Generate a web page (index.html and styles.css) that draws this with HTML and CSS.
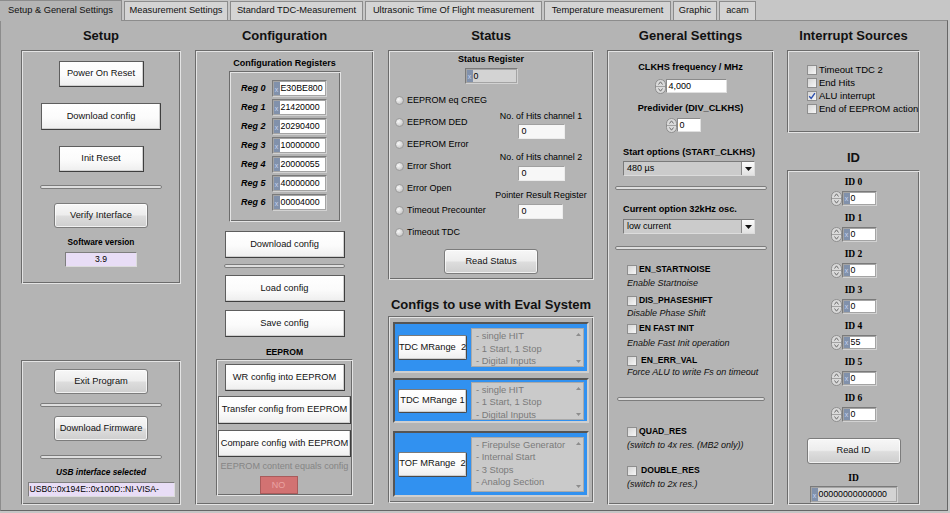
FILE: index.html
```html
<!DOCTYPE html>
<html lang="en">
<head>
<meta charset="utf-8">
<title>TDC Evaluation - Setup</title>
<link rel="stylesheet" href="styles.css">
</head>
<body>
<div class="app">
  <div class="tabs">
    <div class="tab active t1">Setup &amp; General Settings</div>
    <div class="tab t2">Measurement Settings</div>
    <div class="tab t3">Standard TDC-Measurement</div>
    <div class="tab t4">Ultrasonic Time Of Flight measurement</div>
    <div class="tab t5">Temperature measurement</div>
    <div class="tab t6">Graphic</div>
    <div class="tab t7">acam</div>
  </div>
  <div class="panel">
    <!-- Setup -->
    <section class="col c1">
      <h2 class="head">Setup</h2>
      <div class="box setup1">
        <div class="btn w85 h26 mt9">Power On Reset</div>
        <div class="btn w120 h27 mt16">Download config</div>
        <div class="btn w85 h26 mt16">Init Reset</div>
        <div class="sep w122 mt13"></div>
        <div class="btn g w94 h25 mt14">Verify Interface</div>
        <div class="lbl sv mt8">Software version</div>
        <div class="pfield w72 mt3 center">3.9</div>
      </div>
      <div class="box setup2">
        <div class="btn g w94 h25 mt7">Exit Program</div>
        <div class="sep w122 mt9"></div>
        <div class="btn g w94 h25 mt9">Download Firmware</div>
        <div class="sep w122 mt14"></div>
        <div class="lbl usb mt7">USB interface selected</div>
        <div class="pfield w147 mt3 usbv">USB0::0x194E::0x100D::NI-VISA-</div>
      </div>
    </section>

    <!-- Configuration -->
    <section class="col c2">
      <h2 class="head">Configuration</h2>
      <div class="box cfg">
        <div class="lbl cr mt4">Configuration Registers</div>
        <div class="box regs">
          <div class="reg"><span class="rl">Reg 0</span><div class="num rn"><span class="rdx">x</span><span class="v">E30BE800</span></div></div>
          <div class="reg"><span class="rl">Reg 1</span><div class="num rn"><span class="rdx">x</span><span class="v">21420000</span></div></div>
          <div class="reg"><span class="rl">Reg 2</span><div class="num rn"><span class="rdx">x</span><span class="v">20290400</span></div></div>
          <div class="reg"><span class="rl">Reg 3</span><div class="num rn"><span class="rdx">x</span><span class="v">10000000</span></div></div>
          <div class="reg"><span class="rl">Reg 4</span><div class="num rn"><span class="rdx">x</span><span class="v">20000055</span></div></div>
          <div class="reg"><span class="rl">Reg 5</span><div class="num rn"><span class="rdx">x</span><span class="v">40000000</span></div></div>
          <div class="reg"><span class="rl">Reg 6</span><div class="num rn"><span class="rdx">x</span><span class="v">00004000</span></div></div>
        </div>
        <div class="btn w120 h27 mt9">Download config</div>
        <div class="sep w121 mt6"></div>
        <div class="btn w120 h27 mt7">Load config</div>
        <div class="btn w120 h27 mt8">Save config</div>
        <div class="lbl ee mt8">EEPROM</div>
        <div class="box eebox">
          <div class="btn w120 h27 mt3">WR config into EEPROM</div>
          <div class="btn w133 h28 mt5">Transfer config from EEPROM</div>
          <div class="btn w133 h27 mt6">Compare config with EEPROM</div>
          <div class="dis mt3">EEPROM content equals config</div>
          <div class="led mt3">NO</div>
        </div>
      </div>
    </section>

    <!-- Status -->
    <section class="col c3">
      <h2 class="head">Status</h2>
      <div class="box status">
        <div class="lbl sr">Status Register</div>
        <div class="num ind sreg mt2"><span class="rdx">x</span><span class="v">0</span></div>
        <div class="srow">
          <div class="rlist">
            <div class="ritem"><span class="radio"></span>EEPROM eq CREG</div>
            <div class="ritem"><span class="radio"></span>EEPROM DED</div>
            <div class="ritem"><span class="radio"></span>EEPROM Error</div>
            <div class="ritem"><span class="radio"></span>Error Short</div>
            <div class="ritem"><span class="radio"></span>Error Open</div>
            <div class="ritem"><span class="radio"></span>Timeout Precounter</div>
            <div class="ritem"><span class="radio"></span>Timeout TDC</div>
          </div>
          <div class="hits">
            <div class="hl">No. of Hits channel 1</div>
            <div class="pl mt1">0</div>
            <div class="hl mt11">No. of Hits channel 2</div>
            <div class="pl mt2">0</div>
            <div class="hl mt7">Pointer Result Register</div>
            <div class="pl pl3 mt2">0</div>
          </div>
        </div>
        <div class="btn g w94 h25 mt6">Read Status</div>
      </div>
      <h2 class="head head2">Configs to use with Eval System</h2>
      <div class="box evals">
        <div class="cpanel p1">
          <div class="btn cbtn">TDC MRange&nbsp; 2</div>
          <div class="lbox lb1">
            <div class="items"><div>- single HIT</div><div>- 1 Start, 1 Stop</div><div>- Digital Inputs</div></div>
            <div class="sb"><svg width="5" height="3" viewBox="0 0 5 3"><path d="M0 3L2.5 0L5 3Z" fill="#8c8c8c"/></svg><svg width="5" height="3" viewBox="0 0 5 3"><path d="M0 0H5L2.5 3Z" fill="#8c8c8c"/></svg></div>
          </div>
        </div>
        <div class="cpanel p2">
          <div class="btn cbtn">TDC MRange 1</div>
          <div class="lbox lb2">
            <div class="items"><div>- single HIT</div><div>- 1 Start, 1 Stop</div><div>- Digital Inputs</div></div>
            <div class="sb"><svg width="5" height="3" viewBox="0 0 5 3"><path d="M0 3L2.5 0L5 3Z" fill="#8c8c8c"/></svg><svg width="5" height="3" viewBox="0 0 5 3"><path d="M0 0H5L2.5 3Z" fill="#8c8c8c"/></svg></div>
          </div>
        </div>
        <div class="cpanel p3">
          <div class="btn cbtn">TOF MRange&nbsp; 2</div>
          <div class="lbox lb3">
            <div class="items"><div>- Firepulse Generator</div><div>- Internal Start</div><div>- 3 Stops</div><div>- Analog Section</div></div>
            <div class="sb"><svg width="5" height="3" viewBox="0 0 5 3"><path d="M0 3L2.5 0L5 3Z" fill="#8c8c8c"/></svg><svg width="5" height="3" viewBox="0 0 5 3"><path d="M0 0H5L2.5 3Z" fill="#8c8c8c"/></svg></div>
          </div>
        </div>
      </div>
    </section>

    <!-- General Settings -->
    <section class="col c4">
      <h2 class="head">General Settings</h2>
      <div class="box gen">
        <div class="lbl gl mt8">CLKHS frequency / MHz</div>
        <div class="spinrow mt5">
          <svg class="spin" width="11" height="15" viewBox="0 0 11 15"><rect x="0.5" y="0.5" width="10" height="14" rx="5" fill="#dadada" stroke="#8e8e8e"/><path d="M1 7.5H10" stroke="#a2a2a2"/><path d="M3.5 5.5L5.5 2.8L7.5 5.5" fill="none" stroke="#6e6e6e"/><path d="M3.5 9.5L5.5 12.2L7.5 9.5" fill="none" stroke="#6e6e6e"/></svg>
          <div class="wf w61">4,000</div>
        </div>
        <div class="lbl gl mt8">Predivider (DIV_CLKHS)</div>
        <div class="spinrow mt3 shiftl">
          <svg class="spin" width="11" height="15" viewBox="0 0 11 15"><rect x="0.5" y="0.5" width="10" height="14" rx="5" fill="#dadada" stroke="#8e8e8e"/><path d="M1 7.5H10" stroke="#a2a2a2"/><path d="M3.5 5.5L5.5 2.8L7.5 5.5" fill="none" stroke="#6e6e6e"/><path d="M3.5 9.5L5.5 12.2L7.5 9.5" fill="none" stroke="#6e6e6e"/></svg>
          <div class="wf w24">0</div>
        </div>
        <div class="lbl gl left mt13">Start options (START_CLKHS)</div>
        <div class="dd mt2"><span class="t">480 µs</span><span class="arr"><svg width="7" height="4" viewBox="0 0 7 4"><path d="M0 0H7L3.5 4Z" fill="#111"/></svg></span></div>
        <div class="sep w152 mt10"></div>
        <div class="lbl gl left mt12">Current option 32kHz osc.</div>
        <div class="dd mt3"><span class="t">low current</span><span class="arr"><svg width="7" height="4" viewBox="0 0 7 4"><path d="M0 0H7L3.5 4Z" fill="#111"/></svg></span></div>
        <div class="sep w152 mt12"></div>
        <div class="chk mt13"><span class="cb"></span><b>EN_STARTNOISE</b></div>
        <div class="it mt1">Enable Startnoise</div>
        <div class="chk mt5"><span class="cb"></span><b>DIS_PHASESHIFT</b></div>
        <div class="it">Disable Phase Shift</div>
        <div class="chk mt3"><span class="cb"></span><b>EN FAST INIT</b></div>
        <div class="it mt2">Enable Fast Init operation</div>
        <div class="chk short mt6"><span class="cb"></span><b>EN_ERR_VAL</b></div>
        <div class="it">Force ALU to write Fs on timeout</div>
        <div class="sep w148 mt19"></div>
        <div class="chk mt24"><span class="cb"></span><b>QUAD_RES</b></div>
        <div class="it mt1">(switch to 4x res. (MB2 only))</div>
        <div class="chk wide mt13"><span class="cb"></span><b>DOUBLE_RES</b></div>
        <div class="it mt1">(switch to 2x res.)</div>
      </div>
    </section>

    <!-- Interrupt & ID -->
    <section class="col c5">
      <h2 class="head">Interrupt Sources</h2>
      <div class="box irq">
        <div class="ic"><span class="cb"></span>Timeout TDC 2</div>
        <div class="ic"><span class="cb"></span>End Hits</div>
        <div class="ic"><span class="cb on"><svg width="8" height="8" viewBox="0 0 8 8"><path d="M1.2 4.2L3.2 6.4L6.9 1.2" fill="none" stroke="#2b4fae" stroke-width="1.4"/></svg></span>ALU interrupt</div>
        <div class="ic"><span class="cb"></span>End of EEPROM action</div>
      </div>
      <h2 class="head head-id">ID</h2>
      <div class="box idbox">
        <div class="idl mt4">ID 0</div>
        <div class="idrow mt3"><svg class="spin" width="11" height="15" viewBox="0 0 11 15"><rect x="0.5" y="0.5" width="10" height="14" rx="5" fill="#dadada" stroke="#8e8e8e"/><path d="M1 7.5H10" stroke="#a2a2a2"/><path d="M3.5 5.5L5.5 2.8L7.5 5.5" fill="none" stroke="#6e6e6e"/><path d="M3.5 9.5L5.5 12.2L7.5 9.5" fill="none" stroke="#6e6e6e"/></svg><div class="num idn"><span class="rdx">x</span><span class="v">0</span></div></div>
        <div class="idl mt6">ID 1</div>
        <div class="idrow mt3"><svg class="spin" width="11" height="15" viewBox="0 0 11 15"><rect x="0.5" y="0.5" width="10" height="14" rx="5" fill="#dadada" stroke="#8e8e8e"/><path d="M1 7.5H10" stroke="#a2a2a2"/><path d="M3.5 5.5L5.5 2.8L7.5 5.5" fill="none" stroke="#6e6e6e"/><path d="M3.5 9.5L5.5 12.2L7.5 9.5" fill="none" stroke="#6e6e6e"/></svg><div class="num idn"><span class="rdx">x</span><span class="v">0</span></div></div>
        <div class="idl mt6">ID 2</div>
        <div class="idrow mt3"><svg class="spin" width="11" height="15" viewBox="0 0 11 15"><rect x="0.5" y="0.5" width="10" height="14" rx="5" fill="#dadada" stroke="#8e8e8e"/><path d="M1 7.5H10" stroke="#a2a2a2"/><path d="M3.5 5.5L5.5 2.8L7.5 5.5" fill="none" stroke="#6e6e6e"/><path d="M3.5 9.5L5.5 12.2L7.5 9.5" fill="none" stroke="#6e6e6e"/></svg><div class="num idn"><span class="rdx">x</span><span class="v">0</span></div></div>
        <div class="idl mt6">ID 3</div>
        <div class="idrow mt3"><svg class="spin" width="11" height="15" viewBox="0 0 11 15"><rect x="0.5" y="0.5" width="10" height="14" rx="5" fill="#dadada" stroke="#8e8e8e"/><path d="M1 7.5H10" stroke="#a2a2a2"/><path d="M3.5 5.5L5.5 2.8L7.5 5.5" fill="none" stroke="#6e6e6e"/><path d="M3.5 9.5L5.5 12.2L7.5 9.5" fill="none" stroke="#6e6e6e"/></svg><div class="num idn"><span class="rdx">x</span><span class="v">0</span></div></div>
        <div class="idl mt6">ID 4</div>
        <div class="idrow mt3"><svg class="spin" width="11" height="15" viewBox="0 0 11 15"><rect x="0.5" y="0.5" width="10" height="14" rx="5" fill="#dadada" stroke="#8e8e8e"/><path d="M1 7.5H10" stroke="#a2a2a2"/><path d="M3.5 5.5L5.5 2.8L7.5 5.5" fill="none" stroke="#6e6e6e"/><path d="M3.5 9.5L5.5 12.2L7.5 9.5" fill="none" stroke="#6e6e6e"/></svg><div class="num idn"><span class="rdx">x</span><span class="v">55</span></div></div>
        <div class="idl mt6">ID 5</div>
        <div class="idrow mt3"><svg class="spin" width="11" height="15" viewBox="0 0 11 15"><rect x="0.5" y="0.5" width="10" height="14" rx="5" fill="#dadada" stroke="#8e8e8e"/><path d="M1 7.5H10" stroke="#a2a2a2"/><path d="M3.5 5.5L5.5 2.8L7.5 5.5" fill="none" stroke="#6e6e6e"/><path d="M3.5 9.5L5.5 12.2L7.5 9.5" fill="none" stroke="#6e6e6e"/></svg><div class="num idn"><span class="rdx">x</span><span class="v">0</span></div></div>
        <div class="idl mt6">ID 6</div>
        <div class="idrow mt3"><svg class="spin" width="11" height="15" viewBox="0 0 11 15"><rect x="0.5" y="0.5" width="10" height="14" rx="5" fill="#dadada" stroke="#8e8e8e"/><path d="M1 7.5H10" stroke="#a2a2a2"/><path d="M3.5 5.5L5.5 2.8L7.5 5.5" fill="none" stroke="#6e6e6e"/><path d="M3.5 9.5L5.5 12.2L7.5 9.5" fill="none" stroke="#6e6e6e"/></svg><div class="num idn"><span class="rdx">x</span><span class="v">0</span></div></div>
        <div class="btn g w94 h26 mt16">Read ID</div>
        <div class="idl mt8">ID</div>
        <div class="num ind idv mt2"><span class="rdx">x</span><span class="v">00000000000000</span></div>
      </div>
    </section>
  </div>
</div>
</body>
</html>
```

FILE: styles.css
```css
* { box-sizing: border-box; margin: 0; padding: 0; }
html, body { width: 950px; height: 513px; overflow: hidden; }
body {
  background: #c6c6c6;
  font-family: "Liberation Sans", Arial, sans-serif;
  font-size: 9px;
  color: #000;
  line-height: 1.2;
}
.app { width: 950px; height: 513px; display: flex; flex-direction: column; }

/* tabs */
.tabs { height: 20px; display: flex; align-items: flex-end; gap: 2px; }
.tab {
  height: 19px; flex: none;
  border: 1px solid #8c8c8c; border-bottom: none;
  background: #d4d4d4;
  display: flex; align-items: center; justify-content: center;
  font-size: 9.3px; color: #111; white-space: nowrap;
}
.tab.active { height: 21px; margin-bottom: -1px; background: #b4b4b4; border-left: none; z-index: 1; }
.t1 { width: 122px; } .t2 { width: 104px; } .t3 { width: 133px; } .t4 { width: 177px; }
.t5 { width: 127px; } .t6 { width: 44px; } .t7 { width: 37px; }

.panel {
  width: 948px; height: 491px;
  background: #b4b4b4;
  border: 1px solid #8c8c8c; border-right-color: #666; border-bottom-color: #666;
  display: flex; align-items: flex-start;
  padding-left: 20px;
}

/* columns */
.col { display: flex; flex-direction: column; flex: none; }
.c1 { width: 160px; }
.c2 { width: 179px; margin-left: 14px; }
.c3 { width: 206px; margin-left: 14px; }
.c4 { width: 167px; margin-left: 13px; }
.c5 { width: 133px; margin-left: 13px; }

.head {
  height: 29px; text-align: center;
  font: bold 13px/30px "Liberation Sans", Arial, sans-serif; color: #111; white-space: nowrap;
}
.head2 { height: 36px; line-height: 15px; padding-top: 17px; }
.head-id { height: 37px; line-height: 15px; padding-top: 17px; }

.box {
  border: 1px solid; border-color: #6c6c6c #e4e4e4 #e4e4e4 #6c6c6c;
  box-shadow: inset 1px 1px 0 #e4e4e4, inset -1px -1px 0 #6c6c6c;
  padding: 1px;
  display: flex; flex-direction: column; align-items: center;
  flex: none;
}
.setup1 { height: 234px; }
.setup2 { height: 145px; margin-top: 76px; }
.cfg { height: 455px; }
.status { height: 230px; }
.evals { height: 187px; align-items: flex-start; }
.gen { height: 455px; }
.irq { height: 83px; align-items: flex-start; padding: 12px 0 0 19px; }
.idbox { height: 335px; }

/* spacing utilities */
.mt1 { margin-top: 1px; } .mt2 { margin-top: 2px; } .mt3 { margin-top: 3px; } .mt4 { margin-top: 4px; }
.mt5 { margin-top: 5px; } .mt6 { margin-top: 6px; } .mt7 { margin-top: 7px; } .mt8 { margin-top: 8px; }
.mt9 { margin-top: 9px; } .mt10 { margin-top: 10px; } .mt11 { margin-top: 11px; } .mt12 { margin-top: 12px; }
.mt13 { margin-top: 13px; } .mt14 { margin-top: 14px; } .mt16 { margin-top: 16px; } .mt19 { margin-top: 19px; }
.mt24 { margin-top: 24px; }
.w24 { width: 24px; } .w61 { width: 61px; } .w72 { width: 72px; } .w85 { width: 85px; } .w94 { width: 94px; }
.w120 { width: 120px; } .w121 { width: 121px; } .w122 { width: 122px; } .w133 { width: 133px; }
.w147 { width: 147px; } .w148 { width: 148px; } .w152 { width: 152px; }
.h25 { height: 25px; } .h26 { height: 26px; } .h27 { height: 27px; } .h28 { height: 28px; }

/* buttons */
.btn {
  flex: none;
  display: flex; align-items: center; justify-content: center;
  border: 1px solid #5e5e5e; border-right-color: #3e3e3e; border-bottom-color: #3e3e3e;
  background: linear-gradient(#ffffff, #fbfbfb 55%, #eeeeee);
  box-shadow: inset -1px -1px 0 #cfcfcf;
  font-size: 9.3px; white-space: nowrap; color: #111;
}
.btn.g {
  border: 1px solid #7c7c7c; border-radius: 3px;
  background: linear-gradient(#f7f7f7, #ededed 47%, #dddddd 53%, #cecece);
  box-shadow: inset 0 0 0 1px rgba(255,255,255,0.7);
}

.sep {
  flex: none; height: 4px;
  border: 1px solid #7c7c7c; border-radius: 2px;
  background: #dedede;
}

.lbl { font-weight: bold; font-size: 8.3px; line-height: 13px; text-align: center; white-space: nowrap; flex: none; }
.usb { font-style: italic; }
.cr { font-size: 9px; line-height: 14px; }
.ee { font-size: 8.6px; line-height: 14px; }
.sr { font-size: 9px; line-height: 14px; }
.gl { font-size: 9.2px; line-height: 14px; }
.gl.left { align-self: flex-start; margin-left: 14px; }

.pfield {
  flex: none; height: 15px;
  background: #e8ddf6;
  border: 1px solid; border-color: #7e7e7e #dcdcdc #dcdcdc #7e7e7e;
  font-size: 8.6px; line-height: 13px; white-space: nowrap; overflow: hidden;
}
.center { text-align: center; }
.usbv { padding-left: 1px; }

/* register fields */
.regs { width: 112px; height: 151px; margin-top: 1px; padding: 8px 0 0 1px; align-items: flex-start; }
.reg { display: flex; align-items: center; height: 17px; margin-bottom: 2px; }
.rl { width: 35px; text-align: right; font-weight: bold; font-style: italic; font-size: 9px; margin-right: 6px; }

.num {
  flex: none; display: flex;
  background: #a4a4a4;
  border: 1px solid; border-color: #7a7a7a #d2d2d2 #d2d2d2 #7a7a7a;
  padding: 1px;
}
.rn { width: 55px; height: 17px; }
.rdx {
  flex: none; width: 6px; background: #8191ab; color: #c6d4f0;
  font: 7px/7px "Liberation Sans", Arial, sans-serif;
  display: flex; align-items: flex-end; justify-content: center; padding-bottom: 2px;
}
.v { flex: 1; background: #fff; font-size: 8.8px; line-height: 13px; padding-left: 1px; white-space: nowrap; overflow: hidden; }
.ind .v { background: #d3d3d3; }
.sreg { width: 53px; height: 16px; }
.sreg .v { line-height: 12px; }
.idn { width: 35px; height: 15px; }
.idn .v { line-height: 11px; }
.idv { width: 88px; height: 17px; }

.dis { font-size: 9.1px; line-height: 13px; color: #858585; white-space: nowrap; }
.led {
  width: 38px; height: 18px; margin-left: -12px;
  background: #d27272; border: 1px solid #a95b5b;
  color: #eaa3a3; font-size: 9px;
  display: flex; align-items: center; justify-content: center;
}

/* status */
.srow { display: flex; align-self: stretch; margin-top: 5px; }
.rlist { display: flex; flex-direction: column; padding-left: 5px; }
.ritem { height: 22px; display: flex; align-items: center; gap: 3px; font-size: 9px; white-space: nowrap; }
.radio {
  width: 9px; height: 9px; border-radius: 50%;
  background: radial-gradient(circle at 35% 35%, #f8f8f8, #d2d2d2 60%, #a9a9a9);
  border: 1px solid #9c9c9c;
}
.hits { margin-left: auto; margin-right: 3px; width: 96px; display: flex; flex-direction: column; align-items: center; padding-top: 20px; }
.hl { font-size: 8.9px; line-height: 14px; white-space: nowrap; }
.pl {
  width: 47px; height: 15px;
  background: #f7f7f7;
  border: 1px solid; border-color: #a0a0a0 #ececec #ececec #a0a0a0;
  font-size: 9px; line-height: 13px; padding-left: 3px;
}
.pl3 { width: 45px; margin-right: 2px; }

/* configs for eval system */
.cpanel {
  width: 196px; margin-left: 3px;
  background: #3191f0;
  border: 2px solid; border-color: #555 #cfcfcf #cfcfcf #555;
  display: flex; align-items: center; gap: 4px; padding: 0 3px;
}
.p1 { height: 51px; margin-top: 4px; }
.p2 { height: 45px; margin-top: 5px; }
.p3 { height: 66px; margin-top: 8px; }
.cbtn { width: 69px; height: 25px; border-radius: 2px; border-color: #7a7a7a #4a4a4a #4a4a4a #7a7a7a; }
.p2 .cbtn { height: 24px; }
.lbox {
  width: 113px; display: flex;
  background: #cacaca; border: 1px solid #a9a9a9;
  color: #7a7a7a; font-size: 9.4px; line-height: 12.5px;
}
.lb1 { height: 39px; } .lb2 { height: 38px; } .lb3 { height: 55px; }
.items { flex: 1; padding: 1px 0 0 4px; white-space: nowrap; }
.sb { width: 10px; display: flex; flex-direction: column; justify-content: space-between; align-items: center; padding: 4px 0 3px; }
.sb svg { display: block; }

/* general settings */
.spinrow { display: flex; align-items: center; height: 14px; flex: none; }
.spin { display: block; flex: none; }
.shiftl { margin-right: 15px; }
.wf {
  height: 14px; background: #fff;
  border: 1px solid; border-color: #8a8a8a #e0e0e0 #e0e0e0 #8a8a8a;
  font-size: 9px; line-height: 12px; padding-left: 2px;
}
.dd {
  align-self: flex-start; margin-left: 14px;
  width: 132px; height: 15px; display: flex;
  background: #cbcbcb;
  border: 1px solid; border-color: #7a7a7a #dcdcdc #dcdcdc #7a7a7a;
}
.dd .t { flex: 1; font-size: 9px; line-height: 13px; padding-left: 3px; white-space: nowrap; }
.dd .arr {
  width: 13px; display: flex; align-items: center; justify-content: center;
  background: linear-gradient(#fbfbfb, #e2e2e2);
  border-left: 1px solid #8a8a8a;
}
.chk {
  align-self: flex-start; margin-left: 18px;
  display: flex; align-items: center; gap: 2px;
  height: 13px; font-size: 8.6px; white-space: nowrap;
}
.chk.short { height: 11px; }
.chk.short b, .chk.wide b { margin-left: 2px; }
.it { align-self: flex-start; margin-left: 18px; height: 12px; line-height: 12px; font-size: 9px; font-style: italic; white-space: nowrap; color: #111; }
.cb {
  flex: none; width: 10px; height: 10px;
  border: 1px solid #8e8e8e;
  background: linear-gradient(135deg, #d6d6d6, #f6f6f6);
  display: flex; align-items: center; justify-content: center;
}

/* interrupt + id */
.ic { display: flex; align-items: center; gap: 2px; height: 13px; font-size: 9.5px; white-space: nowrap; }
.idl { font: bold 9.5px/12px "Liberation Serif", "Times New Roman", serif; height: 12px; flex: none; }
.idrow { display: flex; align-items: center; height: 15px; flex: none; }
```
